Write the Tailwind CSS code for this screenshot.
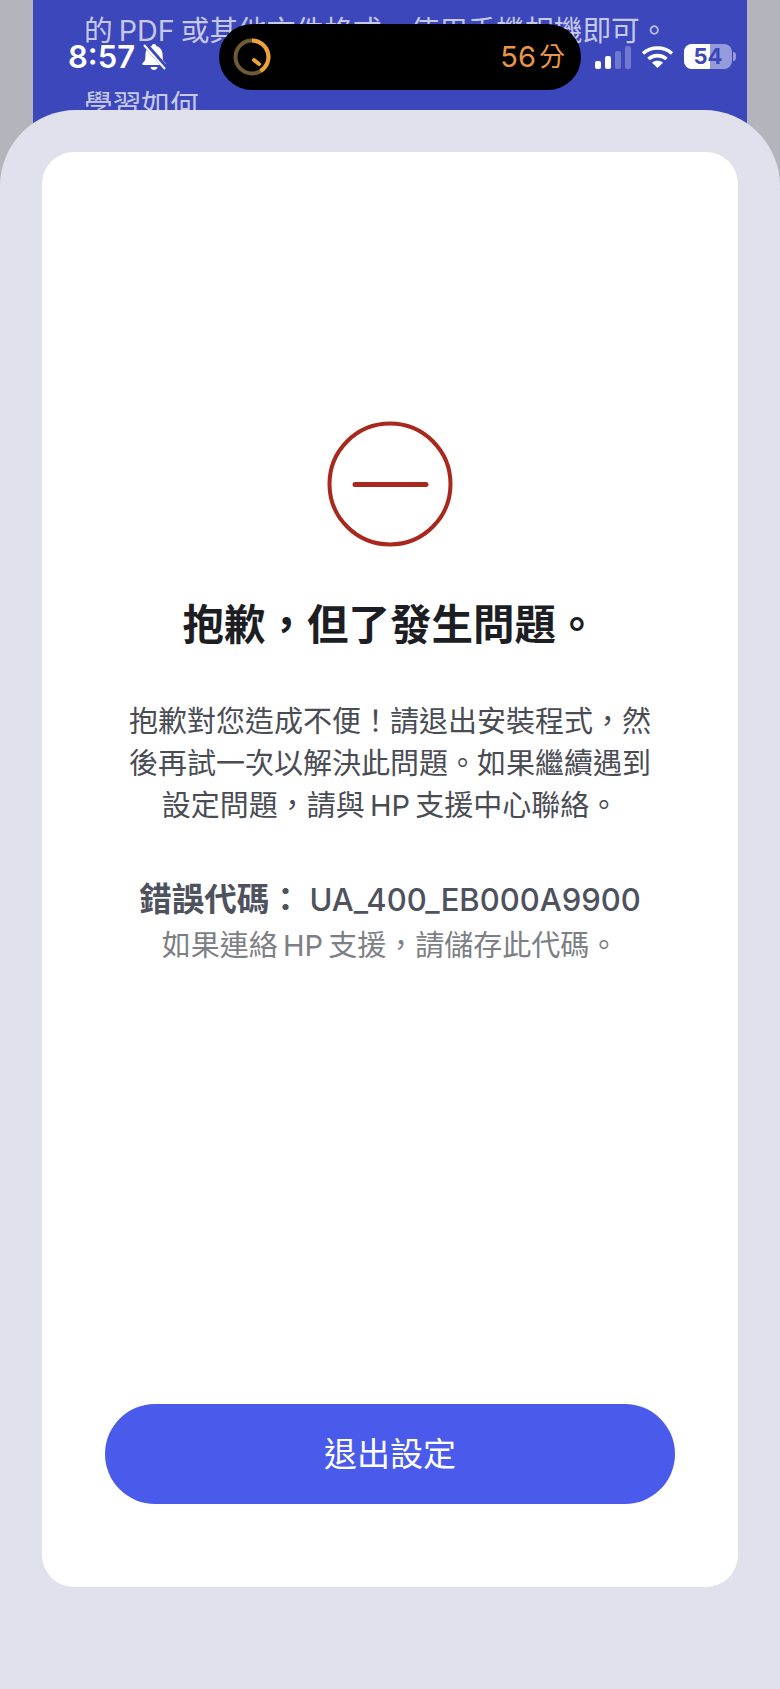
<!DOCTYPE html>
<html lang="zh-Hant">
<head>
  <meta charset="UTF-8">
  <meta name="viewport" content="width=device-width, initial-scale=1.0">
  <title>設定錯誤</title>
  <script src="https://cdn.jsdelivr.net/npm/@tailwindcss/browser@4"></script>
</head>
<body class="bg-[#b4b4bc] font-['Inter','Noto_Sans_CJK_TC',sans-serif]">
  <div class="relative w-[780px] h-[1689px] overflow-hidden flex flex-col">

    <!-- page behind the sheet -->
    <div class="mx-[33px] h-[190px] shrink-0 bg-[#3c47bc] pl-[51px] pt-[11px] text-[28.7px] leading-[40px] text-[#c6cae8] [word-spacing:-2px]">
      <p class="whitespace-nowrap">的 PDF 或其他文件格式，使用手機相機即可。</p>
      <p class="mt-[34px]">學習如何</p>
    </div>

    <!-- sheet -->
    <div class="-mt-[80px] z-10 flex-1 rounded-t-[76px] bg-[#e0e1ec] px-[42px] pt-[42px]">
      <div class="h-[1435px] w-[696px] rounded-[32px] bg-white flex flex-col items-center">
        <svg class="mt-[269px] shrink-0" width="126" height="126" viewBox="0 0 126 126" fill="none">
          <circle cx="63" cy="63" r="60.5" stroke="#a9281e" stroke-width="4"/>
          <line x1="28" y1="63.5" x2="99" y2="63.5" stroke="#a9281e" stroke-width="5" stroke-linecap="round"/>
        </svg>

        <h1 class="mt-[50px] text-[41.5px] leading-[56px] font-bold text-[#1c1e24]">抱歉，但了發生問題。</h1>

        <p class="mt-[48px] w-[560px] text-center text-[29px] leading-[42px] text-[#4a4c54] [word-spacing:-3px]">抱歉對您造成不便！請退出安裝程式，然<br>後再試一次以解決此問題。如果繼續遇到<br>設定問題，請與 HP 支援中心聯絡。</p>

        <p class="mt-[50px] text-[32.5px] leading-[46px] font-bold text-[#4e515e] whitespace-nowrap">錯誤代碼： <span class="text-[31px] font-medium">UA_400_EB000A9900</span></p>
        <p class="mt-[2px] text-[29px] leading-[42px] text-[#7d7f85] [word-spacing:-3px]">如果連絡 HP 支援，請儲存此代碼。</p>

        <button class="mt-auto mb-[83px] h-[100px] w-[570px] rounded-full bg-[#4a5bec] pt-[2px] text-[33px] text-white">退出設定</button>
      </div>
    </div>

    <!-- status bar -->
    <div class="absolute z-20 left-0 top-0 w-full h-[110px]">
      <div class="absolute left-[68px] top-[38px] flex items-center gap-[5px] text-white">
        <span class="text-[31px] leading-[38px] font-semibold">8:57</span>
        <svg width="28" height="28" viewBox="0 0 26 28" fill="white">
          <path d="M13 1c1.3 0 2.2.9 2.3 2 3.700 1 6 4 6.200 8l.3 5c.1 1.700 1.500 3 2.700 4.200.6.600.3 1.800-.8 1.800H2.300c-1.100 0-1.400-1.200-.8-1.800C2.700 19 4.100 17.700 4.200 16l.3-5c.2-4 2.500-7 6.200-8 .1-1.100 1-2 2.300-2z"/>
          <path d="M9.500 24h7c-.3 1.800-1.700 3-3.500 3s-3.200-1.200-3.500-3z"/>
          <line x1="4" y1="1" x2="25" y2="25" stroke="#3c47bc" stroke-width="5"/>
          <line x1="3" y1="2" x2="24" y2="26" stroke="white" stroke-width="2"/>
        </svg>
      </div>

      <div class="absolute left-[219px] top-[24px] h-[66px] w-[362px] rounded-full bg-black flex items-center justify-between pl-[14px] pr-[16px]">
        <svg width="38" height="38" viewBox="0 0 38 38" fill="none">
          <circle cx="19" cy="19" r="16.500" stroke="#6e5a36" stroke-width="4"/>
          <path d="M19 2.500A16.500 16.500 0 0 1 27.500 33.100" stroke="#eea238" stroke-width="4"/>
          <line x1="21" y1="22" x2="26" y2="26" stroke="#eea238" stroke-width="4" stroke-linecap="round"/>
        </svg>
        <span class="flex items-center gap-[3px] text-[#e9964a]">
          <span class="text-[29px] leading-[38px]">56</span>
          <span class="text-[26px] leading-[38px]">分</span>
        </span>
      </div>

      <div class="absolute left-[595px] top-[44px] h-[25px] flex items-end gap-[4px]">
        <span class="h-[8px] w-[6px] rounded-[2px] bg-white"></span>
        <span class="h-[13px] w-[6px] rounded-[2px] bg-white"></span>
        <span class="h-[18px] w-[6px] rounded-[2px] bg-[#7079cf]"></span>
        <span class="h-[23px] w-[6px] rounded-[2px] bg-[#7079cf]"></span>
      </div>

      <svg class="absolute left-[641px] top-[45px]" width="33" height="24" viewBox="0 0 33 24" fill="none" stroke="white" stroke-width="3.600">
        <path d="M2 8.500C10 1.200 23 1.200 31 8.500"/>
        <path d="M7.500 14C12.500 9.500 20.500 9.500 25.500 14"/>
        <path d="M16.500 23l-5.500-5.300c3-2.600 8-2.600 11 0z" fill="white" stroke="none"/>
      </svg>

      <div class="absolute left-[684px] top-[44px] h-[25px] w-[48px] rounded-[8px] overflow-hidden bg-[#959ad9] flex">
        <div class="h-full w-[26px] bg-white"></div>
        <span class="absolute inset-0 text-center text-[22px] leading-[25px] font-bold text-[#3c47bc]">54</span>
      </div>
      <div class="absolute left-[733px] top-[52px] h-[9px] w-[3px] rounded-r-full bg-[#959ad9]"></div>
    </div>
  </div>
</body>
</html>
